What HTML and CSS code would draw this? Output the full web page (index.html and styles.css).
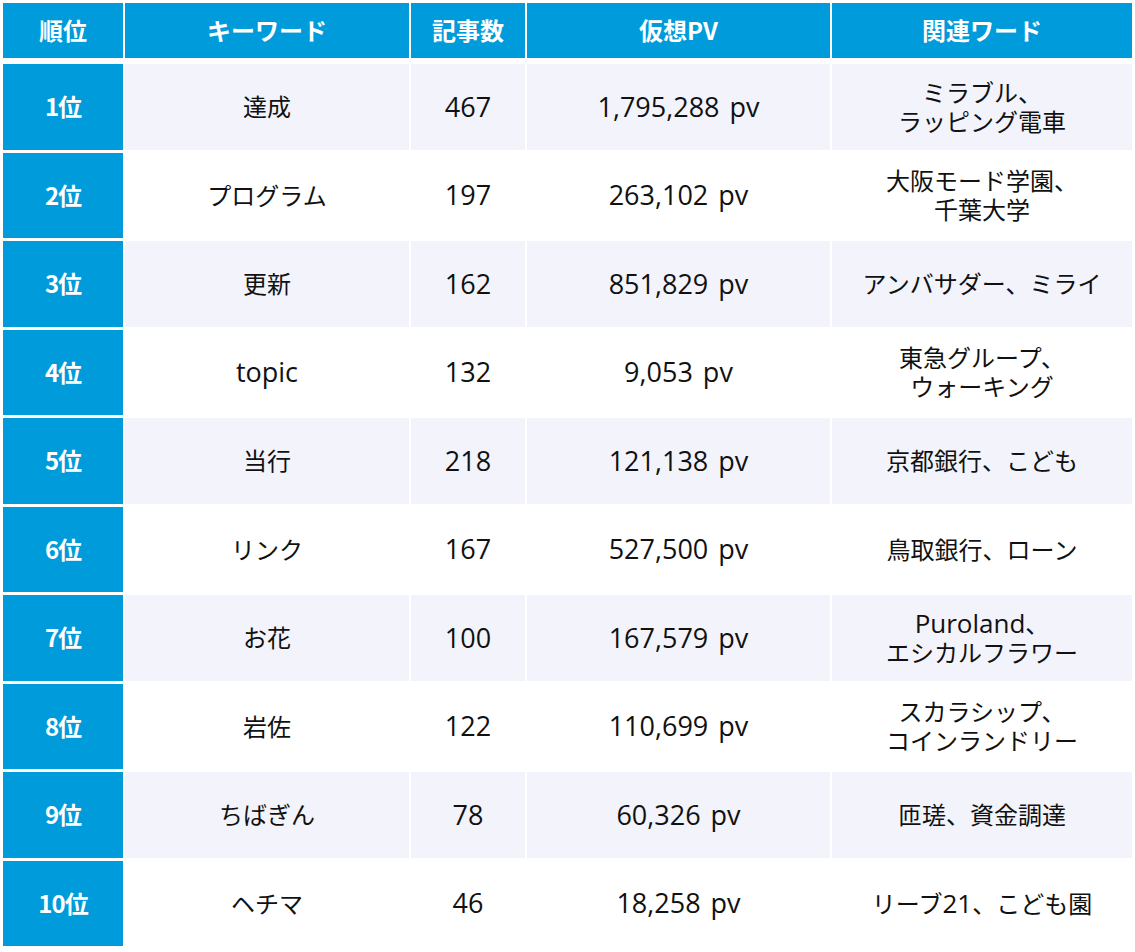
FILE: index.html
```html
<!DOCTYPE html>
<html lang="ja">
<head>
<meta charset="utf-8">
<title>キーワードランキング</title>
<link rel="stylesheet" href="styles.css">
</head>
<body>
<div class="table">
  <div class="row head">
    <div class="cell">順位</div>
    <div class="cell">キーワード</div>
    <div class="cell">記事数</div>
    <div class="cell">仮想PV</div>
    <div class="cell">関連ワード</div>
  </div>
  <div class="row odd">
    <div class="cell rank">1位</div>
    <div class="cell">達成</div>
    <div class="cell lat">467</div>
    <div class="cell lat">1,795,288 pv</div>
    <div class="cell"><span class="txt">ミラブル、<br>ラッピング電車</span></div>
  </div>
  <div class="row">
    <div class="cell rank">2位</div>
    <div class="cell">プログラム</div>
    <div class="cell lat">197</div>
    <div class="cell lat">263,102 pv</div>
    <div class="cell"><span class="txt">大阪モード学園、<br>千葉大学</span></div>
  </div>
  <div class="row odd">
    <div class="cell rank">3位</div>
    <div class="cell">更新</div>
    <div class="cell lat">162</div>
    <div class="cell lat">851,829 pv</div>
    <div class="cell"><span class="txt">アンバサダー、ミライ</span></div>
  </div>
  <div class="row">
    <div class="cell rank">4位</div>
    <div class="cell lat">topic</div>
    <div class="cell lat">132</div>
    <div class="cell lat">9,053 pv</div>
    <div class="cell"><span class="txt">東急グループ、<br>ウォーキング</span></div>
  </div>
  <div class="row odd">
    <div class="cell rank">5位</div>
    <div class="cell">当行</div>
    <div class="cell lat">218</div>
    <div class="cell lat">121,138 pv</div>
    <div class="cell"><span class="txt">京都銀行、こども</span></div>
  </div>
  <div class="row">
    <div class="cell rank">6位</div>
    <div class="cell">リンク</div>
    <div class="cell lat">167</div>
    <div class="cell lat">527,500 pv</div>
    <div class="cell"><span class="txt">鳥取銀行、ローン</span></div>
  </div>
  <div class="row odd">
    <div class="cell rank">7位</div>
    <div class="cell">お花</div>
    <div class="cell lat">100</div>
    <div class="cell lat">167,579 pv</div>
    <div class="cell"><span class="txt"><span class="latin">Puroland</span>、<br>エシカルフラワー</span></div>
  </div>
  <div class="row">
    <div class="cell rank">8位</div>
    <div class="cell">岩佐</div>
    <div class="cell lat">122</div>
    <div class="cell lat">110,699 pv</div>
    <div class="cell"><span class="txt">スカラシップ、<br>コインランドリー</span></div>
  </div>
  <div class="row odd">
    <div class="cell rank">9位</div>
    <div class="cell">ちばぎん</div>
    <div class="cell lat">78</div>
    <div class="cell lat">60,326 pv</div>
    <div class="cell"><span class="txt">匝瑳、資金調達</span></div>
  </div>
  <div class="row">
    <div class="cell rank">10位</div>
    <div class="cell">ヘチマ</div>
    <div class="cell lat">46</div>
    <div class="cell lat">18,258 pv</div>
    <div class="cell"><span class="txt">リーブ<span class="latin">21</span>、こども園</span></div>
  </div>
</div>
</body>
</html>
```
FILE: styles.css
```css
html, body {
  margin: 0;
  padding: 0;
  background: #ffffff;
}
body {
  padding: 3px;
  font-family: "Noto Sans CJK JP", "Noto Sans", sans-serif;
  font-size: 24px;
  color: #111111;
}
.table {
  display: flex;
  flex-direction: column;
  gap: 3px;
  width: 1129px;
}
.row {
  display: grid;
  grid-template-columns: 120px 284px 114px 303px 300px;
  column-gap: 2px;
  height: 85.5px;
}
.cell {
  display: flex;
  align-items: center;
  justify-content: center;
  text-align: center;
  line-height: 1.2;
  background: #ffffff;
}
.txt {
  display: block;
}
.cell.lat {
  font-family: "Open Sans", "Noto Sans CJK JP", sans-serif;
  font-size: 27px;
  word-spacing: 3px;
}
.latin {
  font-family: "Open Sans", "Noto Sans CJK JP", sans-serif;
  font-size: 26px;
  line-height: 1;
}
.row.odd .cell {
  background: #f3f4fb;
}
.row.head {
  height: 55px;
  margin-bottom: 3px;
}
.row.head .cell,
.row .cell.rank {
  background: #009bda;
  color: #ffffff;
  font-weight: 700;
}
.cell.rank {
  letter-spacing: -1px;
}
```
